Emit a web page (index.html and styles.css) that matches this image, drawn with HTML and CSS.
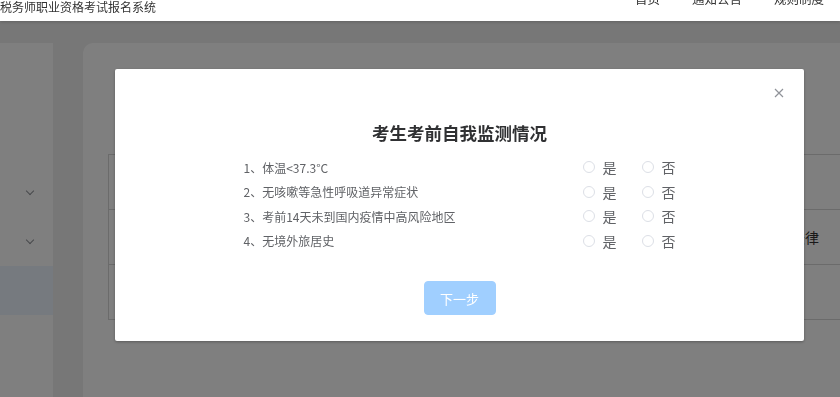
FILE: index.html
```html
<!DOCTYPE html>
<html lang="zh-CN">
<head>
    <meta charset="UTF-8">
    <meta name="viewport" content="width=device-width, initial-scale=1.0">
    <title>税务师职业资格考试报名系统</title>
    <link rel="stylesheet" href="styles.css">
</head>
<body>
    <div class="header">
        <div class="site-title">税务师职业资格考试报名系统</div>
        <div class="nav">
            <span>首页</span>
            <span>通知公告</span>
            <span>规则制度</span>
        </div>
    </div>

    <div class="layout">
        <div class="sidebar">
            <div class="menu-item"><span class="chevron"></span></div>
            <div class="menu-item"><span class="chevron"></span></div>
            <div class="menu-item active"></div>
        </div>
        <div class="card">
            <div class="info-box">
                <div class="info-row"></div>
                <div class="info-row">
                    <div class="info-label"></div>
                    <div class="info-value">法律</div>
                </div>
                <div class="info-row"></div>
            </div>
        </div>
    </div>

    <div class="mask">
        <div class="dialog">
            <button class="dialog-close" aria-label="关闭">
                <svg width="10" height="10" viewBox="0 0 10 10">
                    <path d="M1 1 L9 9 M9 1 L1 9" stroke="#909399" stroke-width="1.2" fill="none"/>
                </svg>
            </button>
            <div class="dialog-title">考生考前自我监测情况</div>
            <div class="check-list">
                <div class="check-row">
                    <span class="check-text">1、体温&lt;37.3°C</span>
                    <div class="radio-group">
                        <label class="radio"><span class="radio-dot"></span>是</label>
                        <label class="radio"><span class="radio-dot"></span>否</label>
                    </div>
                </div>
                <div class="check-row">
                    <span class="check-text">2、无咳嗽等急性呼吸道异常症状</span>
                    <div class="radio-group">
                        <label class="radio"><span class="radio-dot"></span>是</label>
                        <label class="radio"><span class="radio-dot"></span>否</label>
                    </div>
                </div>
                <div class="check-row">
                    <span class="check-text">3、考前14天未到国内疫情中高风险地区</span>
                    <div class="radio-group">
                        <label class="radio"><span class="radio-dot"></span>是</label>
                        <label class="radio"><span class="radio-dot"></span>否</label>
                    </div>
                </div>
                <div class="check-row">
                    <span class="check-text">4、无境外旅居史</span>
                    <div class="radio-group">
                        <label class="radio"><span class="radio-dot"></span>是</label>
                        <label class="radio"><span class="radio-dot"></span>否</label>
                    </div>
                </div>
            </div>
            <div class="dialog-footer">
                <button class="btn-next" disabled>下一步</button>
            </div>
        </div>
    </div>
</body>
</html>
```

FILE: styles.css
```css
body {
    margin: 0;
    height: 397px;
    overflow: hidden;
    font-family: "Noto Sans CJK SC", "Liberation Sans", sans-serif;
    background: #eeeeee;
    color: #333;
}
.header {
    height: 21px;
    background: #fff;
    box-shadow: 0 1px 3px rgba(0, 0, 0, 0.18);
    display: flex;
    justify-content: space-between;
    padding-right: 16px;
    position: relative;
    z-index: 1;
}
.site-title {
    font-size: 12px;
    line-height: 13px;
    color: #333;
}
.nav {
    display: flex;
    gap: 32px;
    font-size: 12.5px;
    line-height: 13px;
    margin-top: -8px;
}
.layout {
    display: flex;
    gap: 30px;
    padding-top: 22px;
    height: 354px;
}
.sidebar {
    width: 53px;
    background: #fff;
    padding-top: 125px;
}
.menu-item {
    height: 49px;
    display: flex;
    align-items: center;
    padding-left: 27px;
}
.menu-item.active {
    background: #ecf5ff;
}
.chevron {
    width: 5px;
    height: 5px;
    border-right: 1px solid #909399;
    border-bottom: 1px solid #909399;
    transform: rotate(45deg);
    margin-top: -3px;
}
.card {
    flex: 1;
    margin-right: -20px;
    background: #fff;
    border-radius: 10px 0 0 0;
    padding: 111px 0 0 25px;
}
.info-box {
    border: 1px solid #d6d6d6;
    border-right: none;
}
.info-row {
    height: 54px;
    border-bottom: 1px solid #d6d6d6;
    display: flex;
    align-items: center;
}
.info-row:last-child {
    border-bottom: none;
}
.info-label {
    width: 682px;
}
.info-value {
    font-size: 14px;
    color: #333;
}
.mask {
    position: fixed;
    inset: 0;
    background: rgba(0, 0, 0, 0.5);
}
.dialog {
    position: absolute;
    left: 115px;
    top: 69px;
    width: 689px;
    background: #fff;
    border-radius: 2px;
    box-shadow: 0 1px 3px rgba(0, 0, 0, 0.3);
    padding: 52px 0 26px;
    box-sizing: border-box;
}
.dialog-close {
    position: absolute;
    top: 19px;
    right: 20px;
    border: none;
    background: none;
    padding: 0;
    width: 10px;
    height: 10px;
    display: flex;
    cursor: pointer;
}
.dialog-title {
    text-align: center;
    font-size: 17.5px;
    line-height: 24px;
    font-weight: bold;
    color: #303133;
}
.check-list {
    width: 432px;
    margin: 10px auto 0;
}
.check-row {
    height: 24.5px;
    display: flex;
    align-items: center;
    justify-content: space-between;
}
.check-text {
    font-size: 12px;
    color: #606266;
}
.radio-group {
    display: flex;
    gap: 25px;
}
.radio {
    display: flex;
    align-items: center;
    gap: 8px;
    font-size: 14px;
    line-height: 16px;
    color: #606266;
    cursor: pointer;
}
.radio-dot {
    width: 10px;
    height: 10px;
    border: 1px solid #dcdfe6;
    border-radius: 50%;
    background: #fff;
}
.dialog-footer {
    display: flex;
    justify-content: center;
    margin-top: 28px;
}
.btn-next {
    width: 72px;
    height: 34px;
    border: 1px solid #a0cfff;
    background: #a0cfff;
    color: #fff;
    border-radius: 4px;
    font-family: inherit;
    font-size: 13px;
}
```
